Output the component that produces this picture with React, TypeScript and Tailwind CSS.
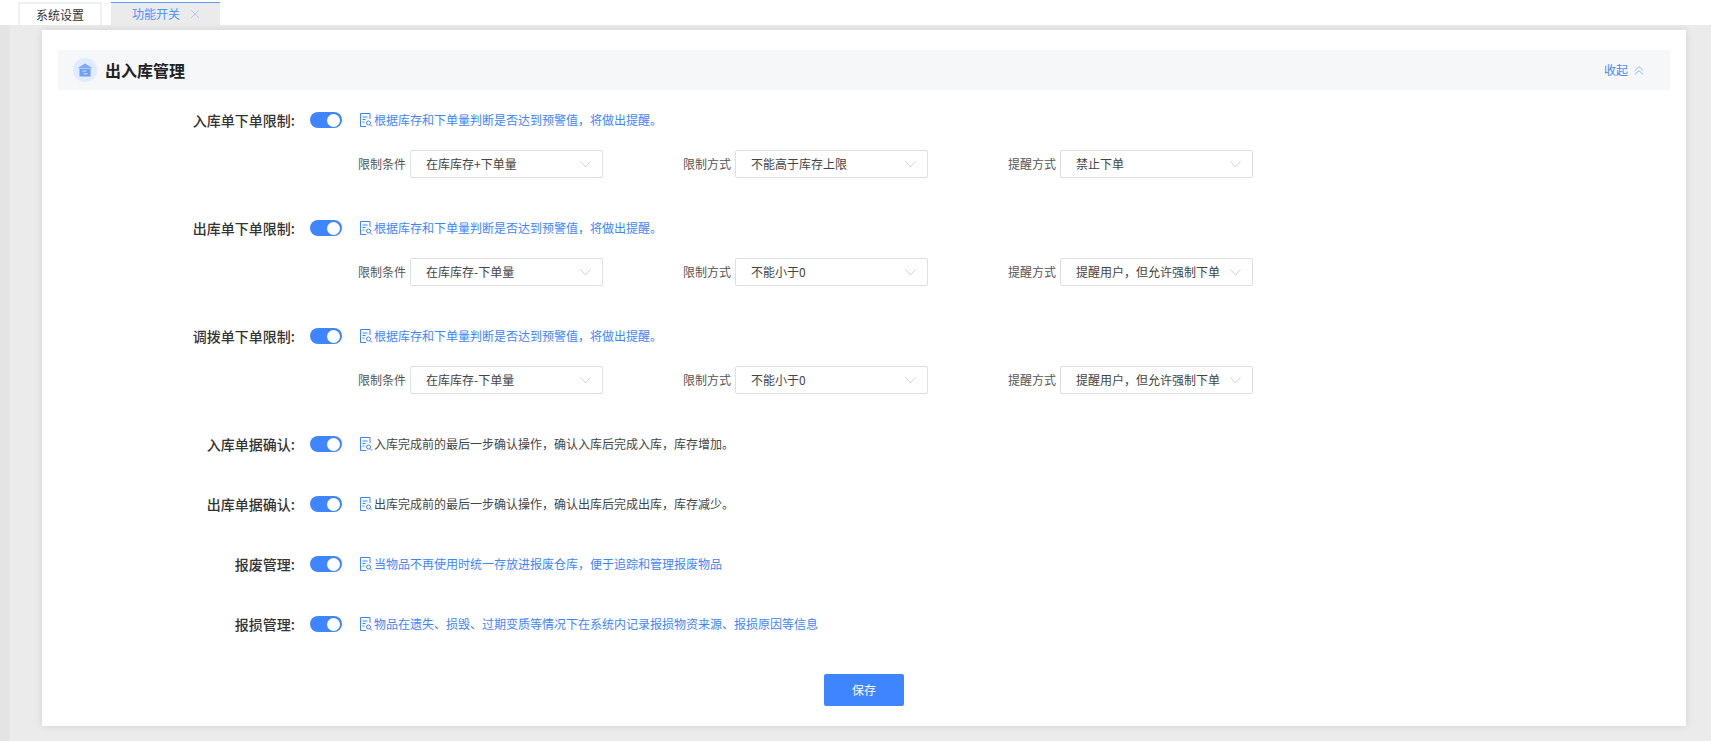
import { X } from 'lucide-react';

const FONT = 'font-["Noto_Sans_CJK_SC","Noto_Sans",sans-serif]';

type Limit = { label: string; value: string };

interface RowData {
  label: string;
  desc: string;
  dark?: boolean;
  limits?: Limit[];
}

const rows: RowData[] = [
  {
    label: '入库单下单限制:',
    desc: '根据库存和下单量判断是否达到预警值，将做出提醒。',
    limits: [
      { label: '限制条件', value: '在库库存+下单量' },
      { label: '限制方式', value: '不能高于库存上限' },
      { label: '提醒方式', value: '禁止下单' },
    ],
  },
  {
    label: '出库单下单限制:',
    desc: '根据库存和下单量判断是否达到预警值，将做出提醒。',
    limits: [
      { label: '限制条件', value: '在库库存-下单量' },
      { label: '限制方式', value: '不能小于0' },
      { label: '提醒方式', value: '提醒用户，但允许强制下单' },
    ],
  },
  {
    label: '调拨单下单限制:',
    desc: '根据库存和下单量判断是否达到预警值，将做出提醒。',
    limits: [
      { label: '限制条件', value: '在库库存-下单量' },
      { label: '限制方式', value: '不能小于0' },
      { label: '提醒方式', value: '提醒用户，但允许强制下单' },
    ],
  },
  { label: '入库单据确认:', desc: '入库完成前的最后一步确认操作，确认入库后完成入库，库存增加。', dark: true },
  { label: '出库单据确认:', desc: '出库完成前的最后一步确认操作，确认出库后完成出库，库存减少。', dark: true },
  { label: '报废管理:', desc: '当物品不再使用时统一存放进报废仓库，便于追踪和管理报废物品' },
  { label: '报损管理:', desc: '物品在遗失、损毁、过期变质等情况下在系统内记录报损物资来源、报损原因等信息' },
];

function DocIcon() {
  return (
    <svg width="13" height="14" viewBox="0 0 13 14" fill="none" stroke="#3f85ff" strokeWidth="1" className="shrink-0">
      <path d="M6 13.5H.5V.5h9.5v5.5" />
      <path d="M2.5 4h5M2.5 6.5h3M2.5 9h2" />
      <circle cx="8.5" cy="10" r="2" />
      <path d="M10 11.5l2 2" />
    </svg>
  );
}

function HouseIcon() {
  return (
    <svg width="14" height="14" viewBox="0 0 14 14" className="shrink-0">
      <path d="M7 0.5L13.5 4.5V5.5H.5V4.5z" fill="#7ea9ff" />
      <rect x="1.5" y="6" width="11" height="7.5" fill="#6f9dfb" />
      <path d="M4.5 8h4M9.5 10.8h-4" stroke="#dbe8ff" strokeWidth="1" fill="none" />
    </svg>
  );
}

function Toggle() {
  return (
    <div className="flex h-4 w-8 shrink-0 items-center justify-end rounded-full bg-[#3f85ff] pr-[2px]">
      <div className="h-[13px] w-[13px] rounded-full bg-white" />
    </div>
  );
}

function SelectBox({ value }: { value: string }) {
  return (
    <div className="flex h-7 w-[193px] items-center justify-between rounded-[2px] border border-[#dcdfe6] bg-white pl-[15px] pr-[11px] text-xs text-[#444]">
      <span className="whitespace-nowrap">{value}</span>
      <svg width="11" height="7" viewBox="0 0 11 7" fill="none" stroke="#cfd2d9" strokeWidth="1" className="shrink-0">
        <path d="M.5.5l5 5.5 5-5.5" />
      </svg>
    </div>
  );
}

function SettingRow({ row }: { row: RowData }) {
  return (
    <div className="mb-10">
      <div className="flex h-5 items-center">
        <div className="w-[237px] shrink-0 text-right text-sm font-medium text-[#333]">{row.label}</div>
        <div className="ml-[15px]">
          <Toggle />
        </div>
        <div className="ml-[18px] flex items-center gap-[1px]">
          <DocIcon />
          <span className={row.dark ? 'text-xs text-[#444]' : 'text-xs text-[#3f85ff]'}>{row.desc}</span>
        </div>
      </div>
      {row.limits && (
        <div className="mt-5 flex pl-[300px]">
          {row.limits.map((l) => (
            <div key={l.label} className="flex w-[325px] items-center gap-[4px]">
              <span className="w-[48px] whitespace-nowrap text-xs text-[#555]">{l.label}</span>
              <SelectBox value={l.value} />
            </div>
          ))}
        </div>
      )}
    </div>
  );
}

export default function App() {
  return (
    <div className={`flex h-[741px] w-full flex-col overflow-hidden bg-white ${FONT}`}>
      <div className="flex h-[25px] shrink-0 items-end pl-[10px]">
        <div className="ml-2 flex h-[23px] w-[84px] items-center justify-center border-x-2 border-t-2 border-[#f0f0f0] bg-white text-xs text-[#333]">
          系统设置
        </div>
        <div className="ml-[9px] flex h-[23px] w-[109px] items-center gap-[8px] border-t border-[#5a9cff] bg-[#ebebeb] pl-[21px] text-xs text-[#4a94ff]">
          功能开关
          <X size={14} strokeWidth={1.1} className="text-[#8fb4f5]" />
        </div>
      </div>
      <div className="flex flex-1 bg-[#ebebeb]">
        <div className="w-[10px] shrink-0 bg-[#e4e4e4]" />
        <div className="flex-1 pl-[32px] pr-[25px] pt-[5px]">
          <div className="h-[696px] bg-white px-4 pt-5 shadow-[0_0_8px_rgba(0,0,0,0.1)]">
            <div className="flex h-10 items-center justify-between bg-[#f6f7f9] pl-[15px] pr-[26px]">
              <div className="flex items-center gap-[8px]">
                <div className="flex h-6 w-6 items-center justify-center rounded-full bg-[#dfebff]">
                  <HouseIcon />
                </div>
                <span className="text-base font-bold text-[#222]">出入库管理</span>
              </div>
              <div className="flex items-center gap-[6px] text-xs text-[#4a88f5]">
                收起
                <svg width="10" height="9" viewBox="0 0 10 9" fill="none" stroke="#8fb4f8" strokeWidth="1">
                  <path d="M.8 4.5L5 .7l4.2 3.8M.8 8.5L5 4.7l4.2 3.8" />
                </svg>
              </div>
            </div>
            <div className="mt-5">
              {rows.map((r) => (
                <SettingRow key={r.label} row={r} />
              ))}
            </div>
            <div className="flex justify-center">
              <button className="h-8 w-20 rounded-[2px] bg-[#3f85ff] text-xs text-white">保存</button>
            </div>
          </div>
        </div>
      </div>
    </div>
  );
}
